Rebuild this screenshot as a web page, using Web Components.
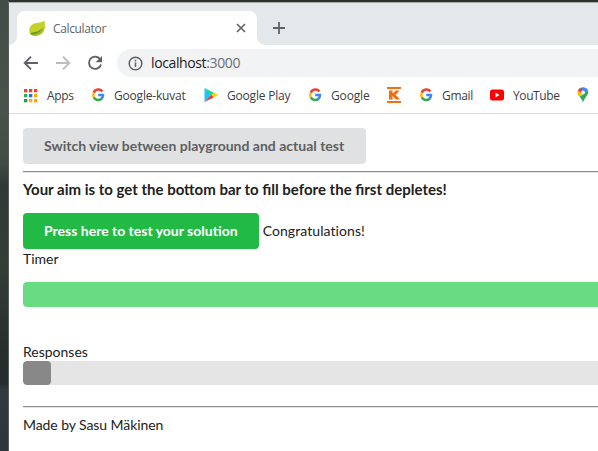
<!DOCTYPE html>
<html lang="en">
<head>
<meta charset="utf-8">
<title>Calculator</title>
<style>
html,body{margin:0;height:100%;overflow:hidden}
</style>
</head>
<body>
<desktop-backdrop>
  <browser-window>
    <tab-strip slot="tabs"><browser-tab>Calculator</browser-tab></tab-strip>
    <address-bar slot="toolbar" host="localhost" port=":3000"></address-bar>
    <bookmarks-bar slot="bookmarks">
      <book-mark icon="apps" style="width:68px;--ls:-.3px;--gap:9px">Apps</book-mark>
      <book-mark icon="google" style="width:113px;--ls:-.2px">Google-kuvat</book-mark>
      <book-mark icon="play" style="width:104px;--ls:-.2px">Google Play</book-mark>
      <book-mark icon="google" style="width:79px;--ls:-.15px">Google</book-mark>
      <book-mark icon="kesko" style="width:32px"></book-mark>
      <book-mark icon="google" style="width:71px;--ls:-.3px">Gmail</book-mark>
      <book-mark icon="youtube" style="width:86px;--ls:-.4px">YouTube</book-mark>
      <book-mark icon="maps" style="width:24px"></book-mark>
    </bookmarks-bar>
    <test-page></test-page>
  </browser-window>
</desktop-backdrop>
<script>
const define = (name, html, setup) => customElements.define(name, class extends HTMLElement {
  constructor() {
    super();
    this.attachShadow({mode: 'open'}).innerHTML = html;
  }
  connectedCallback() { if (setup) setup(this, this.shadowRoot); }
});

define('desktop-backdrop', `<style>
:host{display:block;box-sizing:border-box;width:100vw;height:100vh;padding:2px 0 0 8px;overflow:hidden;
background:linear-gradient(#2c332d,#2c332d) 9px 0/100% 2px no-repeat,linear-gradient(180deg,#434d47 0,#48534d 110px,#414b46 165px,#2f3935 185px,#343e39 260px,#29312e 340px,#242c2c 383px,#303a40 390px,#2b353b 100%)}
</style><slot></slot>`);

define('browser-window', `<style>
:host{display:flex;flex-direction:column;height:100%;box-sizing:border-box;background:#fff;border-top:1px solid #a6aaa9;border-left:1px solid #555d59}
</style><slot name="tabs"></slot><slot name="toolbar"></slot><slot name="bookmarks"></slot><slot></slot>`);

define('tab-strip', `<style>
:host{display:flex;align-items:flex-end;height:42px;background:#e5e8eb;flex:none;padding-left:8px}
.new{width:12px;height:12px;margin:0 0 11px 16px}
</style><slot></slot><svg class="new" viewBox="0 0 12 12"><path d="M6 0v12M0 6h12" stroke="#5f6368" stroke-width="1.8"/></svg>`);

define('browser-tab', `<style>
:host{display:flex;align-items:center;position:relative;box-sizing:border-box;width:240px;height:34px;padding:0 11px 0 12px;background:#fff;border-radius:8px 8px 0 0;font:12px "Open Sans","Noto Sans",sans-serif;color:#5f6368}
:host::before,:host::after{content:"";position:absolute;bottom:0;width:8px;height:8px}
:host::before{left:-8px;background:radial-gradient(circle at 0 0,#0000 7.5px,#fff 8px)}
:host::after{right:-8px;background:radial-gradient(circle at 100% 0,#0000 7.5px,#fff 8px)}
.leaf{width:17px;height:17px;margin:1px 7px 0 0}
span{flex:1;letter-spacing:-.35px}
.x{width:10px;height:10px}
</style>
<svg class="leaf" viewBox="0 0 17 17"><path d="M15.3 .6C12.5 3.6 5.6 2 2 5.6C-.4 8.4 0 11.6 1 14C4 16.5 10 16.8 13.4 13.1C16.6 9.5 16.4 4.8 15.3 .6Z" fill="#c3d22b"/><path d="M1.4 13.3C6.5 13.4 11.5 11.6 15 6.8C14.8 10.4 13.5 15 7 15.8C4.6 16 2.6 15.3 1.4 13.3Z" fill="#a4bd25"/><path d="M1.3 12.9C6.5 12.7 10.6 11 13.4 8.1C11.4 12.6 7 14.9 2.1 14.6Z" fill="#6b982c"/></svg>
<span><slot></slot></span>
<svg class="x" viewBox="0 0 10 10"><path d="M1 1l8 8M9 1l-8 8" stroke="#5f6368" stroke-width="1.6"/></svg>`);

define('address-bar', `<style>
:host{display:flex;align-items:center;height:36px;flex:none;padding-left:14px}
svg{width:16px;height:16px;flex:none;margin-right:16px;fill:none;stroke:#5f6368;stroke-width:1.9}
.fwd{stroke:#bbbdbf}
.box{flex:1;display:flex;align-items:center;height:28px;margin-left:-2px;padding-left:11px;border-radius:14px 0 0 14px;background:#f1f3f4;font:14px "Open Sans","Noto Sans",sans-serif;color:#202124}
.box svg{margin-right:8px;width:15px;height:15px;stroke-width:1.5}
#url{letter-spacing:-.38px;padding-bottom:2px}
#port{color:#6b7075}
</style>
<svg viewBox="0 0 16 16"><path d="M15 8H2M8 1.7L1.7 8L8 14.3"/></svg>
<svg class="fwd" viewBox="0 0 16 16"><path d="M1 8h13M8 1.7L14.3 8L8 14.3"/></svg>
<svg viewBox="0 0 16 16"><path d="M13.4 4.7A6.1 6.1 0 1 0 14 9.4"/><path d="M15 1v6.3H8.7Z" fill="#5f6368" stroke="none"/></svg>
<div class="box"><svg viewBox="0 0 15 15"><circle cx="7.5" cy="7.5" r="6.3"/><path d="M7.5 6.6v4.5M7.5 3.8v1.6"/></svg><div id="url"><span id="host"></span><span id="port"></span></div></div>`,
(el, r) => {
  r.getElementById('host').textContent = el.getAttribute('host');
  r.getElementById('port').textContent = el.getAttribute('port');
});

define('bookmarks-bar', `<style>
:host{display:flex;align-items:center;box-sizing:border-box;height:33px;flex:none;padding:0 0 4px 13px;border-bottom:1px solid #d9dbdd;overflow:hidden}
</style><slot></slot>`);

const icons = {
  apps: [['#ea4335','#ea4335','#ea4335'],['#34a853','#1a73e8','#f9ab00'],['#1e9b52','#f9ab00','#f9ab00']]
    .map((row, y) => row.map((c, x) => `<rect x="${2 + x * 5}" y="${2 + y * 5}" width="3.3" height="3.3" fill="${c}"/>`).join('')).join(''),
  google: `<g fill="none" stroke-width="2.5"><path d="M12.4 4.5A5 5 0 0 0 3.8 5.7" stroke="#ea4335"/><path d="M3.8 5.7A5 5 0 0 0 3.8 10.3" stroke="#fbbc05"/><path d="M3.8 10.3A5 5 0 0 0 11.6 11.7" stroke="#34a853"/><path d="M11.4 11.8A5 5 0 0 0 13 8.1H8.2" stroke="#4285f4"/></g>`,
  play: `<path d="M1.5 1v14L9 8Z" fill="#20c5f4"/><path d="M1.5 1L11 5.7L8.5 8.3Z" fill="#16dd76"/><path d="M1.5 15L11 10.3L8.5 7.8Z" fill="#f03747"/><path d="M11 5.5L15 8L11 10.5L8.3 8Z" fill="#ffcd00"/>`,
  kesko: `<path d="M1 0h14v2H1ZM1 14h14v2H1Z" fill="#f26f12"/><path d="M3 3.5h3.6v3.1L9.8 3.5h3.9L9.5 7.8l4.6 4.7H9.9L6.6 9v3.5H3Z" fill="#f26f12"/>`,
  youtube: `<rect x="1" y="2.5" width="14" height="11" rx="2.5" fill="#f00"/><path d="M6.5 5.6v4.8L10.5 8Z" fill="#fff"/>`,
  maps: `<path d="M2.6 4A5.5 5.5 0 0 0 4.8 9.8L9 5.2L5.1 2.9Z" fill="#fbbc04"/><path d="M5 1.3A5.5 5.5 0 0 1 13.1 3.4L8 8.3L6 5Z" fill="#4285f4"/><path d="M5 1.1A5.6 5.6 0 0 0 2.9 3.5L5.5 5.5L7.6 3Z" fill="#ea4335"/><path d="M13.2 3.4C14.2 8.1 9.5 9.6 8 15.8C7.4 12.8 6 11.4 4.7 9.7Z" fill="#34a853"/><circle cx="8" cy="5.4" r="2" fill="#fff"/>`
};
define('book-mark', `<style>
:host{display:flex;align-items:center;gap:var(--gap,8px);flex:none;font:12px "Open Sans","Noto Sans",sans-serif;color:#3c4043;white-space:nowrap;letter-spacing:var(--ls,-.3px)}
svg{width:16px;height:16px;flex:none}
</style><svg viewBox="0 0 16 16"></svg><span><slot></slot></span>`,
(el, r) => { r.querySelector('svg').innerHTML = icons[el.getAttribute('icon')]; });

define('action-button', `<style>
:host{display:inline-flex;align-items:center;box-sizing:border-box;height:36px;padding:0 21px;border-radius:4px;background:#e0e1e2;color:#5f6061;font-weight:700;white-space:nowrap}
:host([positive]){background:#21ba45;color:#fff}
</style><slot></slot>`);

define('progress-bar', `<style>
:host{display:block;height:24px;background:#e5e5e5;border-radius:4px 0 0 4px;overflow:hidden}
div{height:100%;width:var(--fill);background:var(--color);border-radius:4px}
</style><div></div>`);

define('test-page', `<style>
:host{display:block;flex:1;padding:14px 0 0 14px;font:14px/20px Lato,sans-serif;color:#212121}
#sw{width:343px}
hr{margin:7px 0 0;border:0;height:1px;background:#8d8d8d;border-bottom:1px solid #e3e3e3}
h4{margin:6px 0 14px;font-size:15px;line-height:20px;font-weight:700}
.row{display:flex;align-items:center;gap:4px}
.row span{letter-spacing:.08px}
.timer{height:25px;margin:13px 0 35px;--fill:calc(100% + 9px);--color:#69db83}
.responses{--fill:28px;--color:#888;margin:-1px 0 21px}
footer{margin-top:7px;letter-spacing:-.08px;font-variant-ligatures:common-ligatures}
</style>
<action-button id="sw">Switch view between playground and actual test</action-button>
<hr>
<h4>Your aim is to get the bottom bar to fill before the first depletes!</h4>
<div class="row"><action-button positive>Press here to test your solution</action-button><span>Congratulations!</span></div>
<div>Timer</div>
<progress-bar class="timer"></progress-bar>
<div>Responses</div>
<progress-bar class="responses"></progress-bar>
<hr>
<footer>Made by Sasu Mäkinen</footer>`);
</script>
</body>
</html>
